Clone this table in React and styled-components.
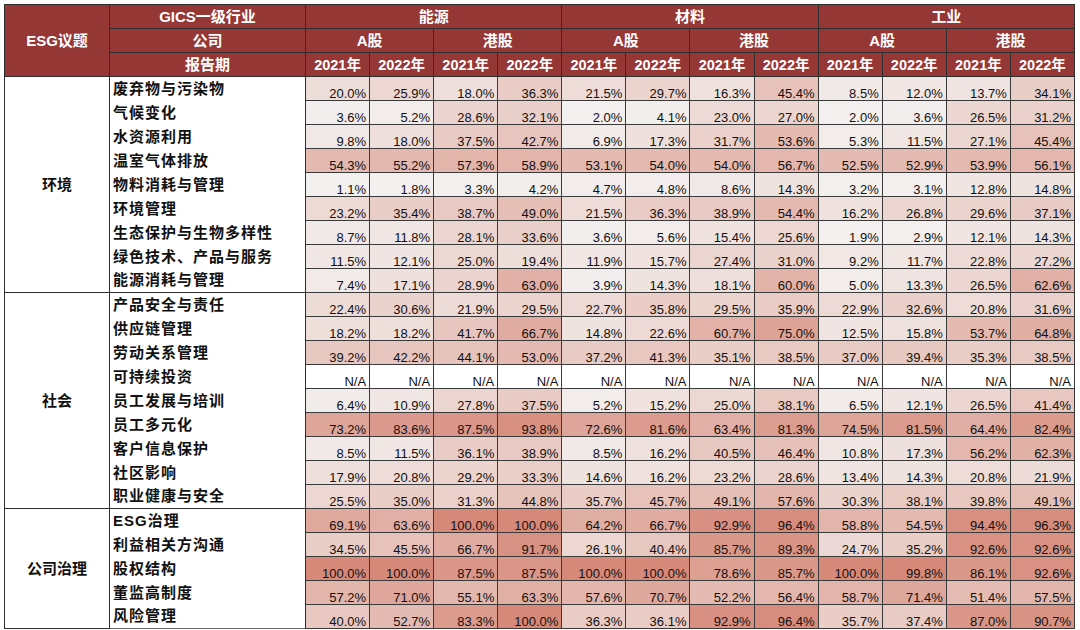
import React from 'react'
import styled, { createGlobalStyle } from 'styled-components'

const GlobalStyle = createGlobalStyle`
  html, body {
    margin: 0;
    padding: 0;
    background: #ffffff;
  }
  body {
    font-family: "Liberation Sans", "Noto Sans CJK SC", sans-serif;
  }
`

const industries = ['能源', '材料', '工业']
const markets = ['A股', '港股']
const years = ['2021年', '2022年']

const groups = [
  {
    name: '环境',
    rows: [
      ['废弃物与污染物', [20.0, 25.9, 18.0, 36.3, 21.5, 29.7, 16.3, 45.4, 8.5, 12.0, 13.7, 34.1]],
      ['气候变化', [3.6, 5.2, 28.6, 32.1, 2.0, 4.1, 23.0, 27.0, 2.0, 3.6, 26.5, 31.2]],
      ['水资源利用', [9.8, 18.0, 37.5, 42.7, 6.9, 17.3, 31.7, 53.6, 5.3, 11.5, 27.1, 45.4]],
      ['温室气体排放', [54.3, 55.2, 57.3, 58.9, 53.1, 54.0, 54.0, 56.7, 52.5, 52.9, 53.9, 56.1]],
      ['物料消耗与管理', [1.1, 1.8, 3.3, 4.2, 4.7, 4.8, 8.6, 14.3, 3.2, 3.1, 12.8, 14.8]],
      ['环境管理', [23.2, 35.4, 38.7, 49.0, 21.5, 36.3, 38.9, 54.4, 16.2, 26.8, 29.6, 37.1]],
      ['生态保护与生物多样性', [8.7, 11.8, 28.1, 33.6, 3.6, 5.6, 15.4, 25.6, 1.9, 2.9, 12.1, 14.3]],
      ['绿色技术、产品与服务', [11.5, 12.1, 25.0, 19.4, 11.9, 15.7, 27.4, 31.0, 9.2, 11.7, 22.8, 27.2]],
      ['能源消耗与管理', [7.4, 17.1, 28.9, 63.0, 3.9, 14.3, 18.1, 60.0, 5.0, 13.3, 26.5, 62.6]],
    ],
  },
  {
    name: '社会',
    rows: [
      ['产品安全与责任', [22.4, 30.6, 21.9, 29.5, 22.7, 35.8, 29.5, 35.9, 22.9, 32.6, 20.8, 31.6]],
      ['供应链管理', [18.2, 18.2, 41.7, 66.7, 14.8, 22.6, 60.7, 75.0, 12.5, 15.8, 53.7, 64.8]],
      ['劳动关系管理', [39.2, 42.2, 44.1, 53.0, 37.2, 41.3, 35.1, 38.5, 37.0, 39.4, 35.3, 38.5]],
      ['可持续投资', Array(12).fill(null)],
      ['员工发展与培训', [6.4, 10.9, 27.8, 37.5, 5.2, 15.2, 25.0, 38.1, 6.5, 12.1, 26.5, 41.4]],
      ['员工多元化', [73.2, 83.6, 87.5, 93.8, 72.6, 81.6, 63.4, 81.3, 74.5, 81.5, 64.4, 82.4]],
      ['客户信息保护', [8.5, 11.5, 36.1, 38.9, 8.5, 16.2, 40.5, 46.4, 10.8, 17.3, 56.2, 62.3]],
      ['社区影响', [17.9, 20.8, 29.2, 33.3, 14.6, 16.2, 23.2, 28.6, 13.4, 14.3, 20.8, 21.9]],
      ['职业健康与安全', [25.5, 35.0, 31.3, 44.8, 35.7, 45.7, 49.1, 57.6, 30.3, 38.1, 39.8, 49.1]],
    ],
  },
  {
    name: '公司治理',
    rows: [
      ['ESG治理', [69.1, 63.6, 100.0, 100.0, 64.2, 66.7, 92.9, 96.4, 58.8, 54.5, 94.4, 96.3]],
      ['利益相关方沟通', [34.5, 45.5, 66.7, 91.7, 26.1, 40.4, 85.7, 89.3, 24.7, 35.2, 92.6, 92.6]],
      ['股权结构', [100.0, 100.0, 87.5, 87.5, 100.0, 100.0, 78.6, 85.7, 100.0, 99.8, 86.1, 92.6]],
      ['董监高制度', [57.2, 71.0, 55.1, 63.3, 57.6, 70.7, 52.2, 56.4, 58.7, 71.4, 51.4, 57.5]],
      ['风险管理', [40.0, 52.7, 83.3, 100.0, 36.3, 36.1, 92.9, 96.4, 35.7, 37.4, 87.0, 90.7]],
    ],
  },
]

// linear heat scale, same as the sheet's colour rule
const heat = (v) => {
  if (v === null) return '#ffffff'
  const t = Math.max(0, Math.min(1, (v - 1.1) / (100 - 1.1)))
  const lo = [243, 241, 240]
  const hi = [214, 137, 121]
  const c = lo.map((l, i) => Math.round(l + (hi[i] - l) * t))
  return `rgb(${c.join(',')})`
}

const App = () => {
  return (
    <Page>
      <GlobalStyle />
      <Table>
        <colgroup>
          <col style={{ width: 105 }} />
          <col style={{ width: 196 }} />
          {Array.from({ length: 12 }).map((_, i) => (
            <col key={i} />
          ))}
        </colgroup>
        <thead>
          <tr>
            <HeadCell rowSpan={3}>ESG议题</HeadCell>
            <HeadCell>GICS一级行业</HeadCell>
            {industries.map((name) => (
              <HeadCell key={name} colSpan={4}>
                {name}
              </HeadCell>
            ))}
          </tr>
          <tr>
            <HeadCell>公司</HeadCell>
            {industries.map((name) =>
              markets.map((m) => (
                <HeadCell key={name + m} colSpan={2}>
                  {m}
                </HeadCell>
              ))
            )}
          </tr>
          <tr>
            <HeadCell>报告期</HeadCell>
            {industries.map((name) =>
              markets.map((m) =>
                years.map((y) => (
                  <YearCell key={name + m + y}>{y}</YearCell>
                ))
              )
            )}
          </tr>
        </thead>
        <tbody>
          {groups.map((group) =>
            group.rows.map(([topic, values], i) => (
              <tr key={topic}>
                {i === 0 && <GroupCell rowSpan={group.rows.length}>{group.name}</GroupCell>}
                <TopicCell $first={i === 0}>{topic}</TopicCell>
                {values.map((v, j) => (
                  <ValueCell key={j} style={{ background: heat(v) }}>
                    {v === null ? 'N/A' : `${v.toFixed(1)}%`}
                  </ValueCell>
                ))}
              </tr>
            ))
          )}
        </tbody>
      </Table>
    </Page>
  )
}

export default App

const Page = styled.div`
  width: 1080px;
  height: 630px;
  padding: 4px 0 0 4px;
  box-sizing: border-box;
  overflow: hidden;
`

const Table = styled.table`
  width: 1071px;
  table-layout: fixed;
  border-collapse: collapse;
  border: 1px solid #6b6b6b;
  font-family: "Liberation Sans", "Noto Sans CJK SC", sans-serif;
`

const HeadCell = styled.th`
  height: 23px;
  padding: 0;
  background: #953735;
  color: #ffffff;
  border: 1px solid #2e2e2e;
  font-size: 15px;
  font-weight: bold;
  line-height: 20px;
  text-align: center;
  white-space: nowrap;
`

const YearCell = styled(HeadCell)`
  font-size: 14.5px;
`

const GroupCell = styled.td`
  padding: 0;
  border: 1px solid #2e2e2e;
  font-size: 15px;
  font-weight: bold;
  line-height: 20px;
  text-align: center;
  vertical-align: middle;
  color: #111111;
`

const TopicCell = styled.td`
  height: 23px;
  padding: 0 0 0 3px;
  border-left: 1px solid #2e2e2e;
  border-right: 1px solid #2e2e2e;
  border-top: ${({ $first }) => ($first ? '1px solid #2e2e2e' : 'none')};
  border-bottom: none;
  font-size: 15px;
  font-weight: bold;
  letter-spacing: 1px;
  line-height: 18px;
  vertical-align: middle;
  color: #111111;
  white-space: nowrap;
`

const ValueCell = styled.td`
  height: 23px;
  padding: 0 3px 0 0;
  border: 1px solid #3a3a3a;
  font-size: 13px;
  line-height: 13px;
  text-align: right;
  vertical-align: bottom;
  color: #111111;
  white-space: nowrap;
`
